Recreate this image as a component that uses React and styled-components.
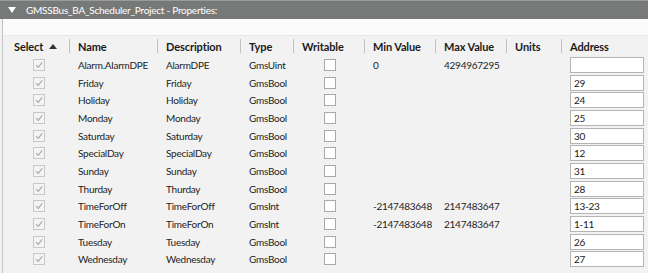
import styled, { createGlobalStyle } from "styled-components";

const GlobalStyle = createGlobalStyle`
  html, body {
    margin: 0;
    padding: 0;
    background: #f2f2f2;
  }
  body {
    font-family: Lato, "Open Sans", sans-serif;
    font-size: 10px;
    letter-spacing: -0.25px;
    color: #222222;
  }
`;

const rows = [
  { name: "Alarm.AlarmDPE", desc: "AlarmDPE", type: "GmsUint", min: "0", max: "4294967295", address: "" },
  { name: "Friday", desc: "Friday", type: "GmsBool", address: "29" },
  { name: "Holiday", desc: "Holiday", type: "GmsBool", address: "24" },
  { name: "Monday", desc: "Monday", type: "GmsBool", address: "25" },
  { name: "Saturday", desc: "Saturday", type: "GmsBool", address: "30" },
  { name: "SpecialDay", desc: "SpecialDay", type: "GmsBool", address: "12" },
  { name: "Sunday", desc: "Sunday", type: "GmsBool", address: "31" },
  { name: "Thurday", desc: "Thurday", type: "GmsBool", address: "28" },
  { name: "TimeForOff", desc: "TimeForOff", type: "GmsInt", min: "-2147483648", max: "2147483647", address: "13-23" },
  { name: "TimeForOn", desc: "TimeForOn", type: "GmsInt", min: "-2147483648", max: "2147483647", address: "1-11" },
  { name: "Tuesday", desc: "Tuesday", type: "GmsBool", address: "26" },
  { name: "Wednesday", desc: "Wednesday", type: "GmsBool", address: "27" },
];

const columns = ["Name", "Description", "Type", "Writable", "Min Value", "Max Value", "Units", "Address"];

export default function App() {
  return (
    <>
      <GlobalStyle />
      <Panel>
        <TitleBar>
          <Caret />
          <span>GMSSBus_BA_Scheduler_Project - Properties:</span>
        </TitleBar>
        <Body>
          <Spacer />
          <Grid>
            <HeaderCell $first>
              Select
              <SortArrow />
            </HeaderCell>
            {columns.map((col) => (
              <HeaderCell key={col}>
                <Sep />
                {col}
              </HeaderCell>
            ))}
            {rows.map((row) => (
              <Row key={row.name}>
                <Cell $pad={30}>
                  <SelectBox>
                    <svg width="10" height="10" viewBox="0 0 10 10">
                      <path d="M2 5.2 L4.2 7.4 L8.2 2.4" fill="none" stroke="#a8a8a8" strokeWidth="1.1" />
                    </svg>
                  </SelectBox>
                </Cell>
                <Cell>{row.name}</Cell>
                <Cell>{row.desc}</Cell>
                <Cell>{row.type}</Cell>
                <Cell $pad={31}>
                  <WriteBox />
                </Cell>
                <Cell>{row.min}</Cell>
                <Cell>{row.max}</Cell>
                <Cell />
                <Cell $pad={9}>
                  <AddressInput>{row.address}</AddressInput>
                </Cell>
              </Row>
            ))}
          </Grid>
        </Body>
      </Panel>
    </>
  );
}

const Panel = styled.div`
  width: 648px;
  height: 273px;
  display: flex;
  flex-direction: column;
  overflow: hidden;
`;

const TitleBar = styled.div`
  height: 19px;
  flex-shrink: 0;
  display: flex;
  align-items: center;
  gap: 10px;
  padding-left: 8px;
  background: #777979;
  border-top: 1px solid #9a9c9c;
  box-sizing: border-box;
  color: #ffffff;
  font-size: 10px;
`;

const Caret = styled.span`
  width: 0;
  height: 0;
  border-left: 4px solid transparent;
  border-right: 4px solid transparent;
  border-top: 6px solid #ffffff;
`;

const Body = styled.div`
  flex: 1;
  margin-left: 2px;
  border-left: 1px solid #c4c4c4;
  display: flex;
  flex-direction: column;
`;

const Spacer = styled.div`
  height: 16px;
  background: #fbfbfb;
  border-bottom: 1px solid #e8e8e8;
`;

const Grid = styled.div`
  display: grid;
  grid-template-columns: 66px 88px 83px 53px 71px 71px 71px 55px 87px;
  grid-template-rows: 20px;
  grid-auto-rows: 17.7px;
  align-items: center;
`;

const HeaderCell = styled.div`
  display: flex;
  align-items: center;
  height: 100%;
  font-size: 11px;
  font-weight: 700;
  letter-spacing: -0.1px;
  color: #1a1a1a;
  padding-left: ${(p) => (p.$first ? "11px" : "0")};
`;

const Sep = styled.span`
  width: 1px;
  height: 14px;
  background: #c2c2c2;
  margin-right: 8px;
`;

const SortArrow = styled.span`
  margin-left: 6px;
  width: 0;
  height: 0;
  border-left: 4px solid transparent;
  border-right: 4px solid transparent;
  border-bottom: 5px solid #333333;
`;

const Row = styled.div`
  display: contents;
`;

const Cell = styled.div`
  display: flex;
  align-items: center;
  height: 100%;
  white-space: nowrap;
  padding-left: ${(p) => (p.$pad != null ? `${p.$pad}px` : "9px")};
`;

const SelectBox = styled.span`
  width: 12px;
  height: 12px;
  box-sizing: border-box;
  border: 1px solid #c8c8c8;
  background: #f4f4f4;
  display: flex;
  align-items: center;
  justify-content: center;
`;

const WriteBox = styled.span`
  width: 12px;
  height: 12px;
  box-sizing: border-box;
  border: 1px solid #a8a8a8;
  background: #ffffff;
`;

const AddressInput = styled.div`
  width: 74px;
  height: 16px;
  box-sizing: border-box;
  border: 1px solid #b4b4b4;
  background: #ffffff;
  padding-left: 3px;
  display: flex;
  align-items: center;
  color: #1a1a1a;
`;
